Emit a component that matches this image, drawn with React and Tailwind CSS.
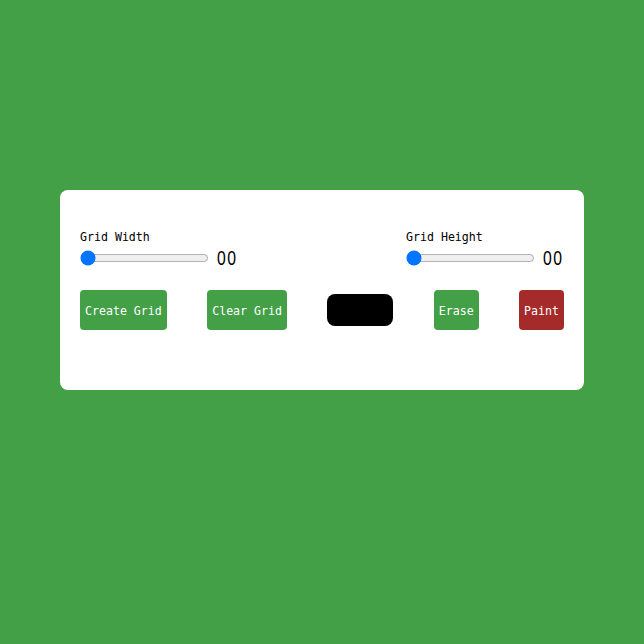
import React, { useState } from "react";

const font = { fontFamily: '"DejaVu Sans Mono", "Liberation Mono", monospace' };

const SizeControl = ({ label, value, onChange }) => (
  <div className="flex flex-col">
    <label className="text-[11.6px] leading-[14px] text-black mb-[4px]">{label}</label>
    <div className="flex items-center">
      <input
        type="range"
        min="0"
        max="50"
        value={value}
        onChange={(e) => onChange(e.target.value)}
        className="w-[129px] m-0"
      />
      <span
        className="ml-[8px] w-[21px] inline-block text-[21px] leading-[20px] font-extralight scale-x-[0.75] origin-left tracking-[2px]"
        style={{ fontFamily: '"Liberation Sans", sans-serif' }}
      >
        {String(value).padStart(2, "0")}
      </span>
    </div>
  </div>
);

const App = () => {
  const [width, setWidth] = useState(0);
  const [height, setHeight] = useState(0);

  return (
    <div className="min-h-screen bg-[#43a047] pt-[190px]" style={font}>
      <div className="mx-auto w-[524px] h-[200px] bg-white rounded-lg px-5 pt-[40px]">
        <div className="flex justify-between items-start">
          <SizeControl label="Grid Width" value={width} onChange={setWidth} />
          <SizeControl label="Grid Height" value={height} onChange={setHeight} />
        </div>
        <div className="flex justify-between items-center mt-[22px]">
          <button className="h-10 px-[5px] pt-[3px] text-[11.6px] text-white bg-[#43a047] rounded">
            Create Grid
          </button>
          <button className="h-10 px-[5px] pt-[3px] text-[11.6px] text-white bg-[#43a047] rounded">
            Clear Grid
          </button>
          <div className="w-[66px] h-8 bg-black rounded-lg" />
          <button className="h-10 px-[5px] pt-[3px] text-[11.6px] text-white bg-[#43a047] rounded">
            Erase
          </button>
          <button className="h-10 px-[5px] pt-[3px] text-[11.6px] text-white bg-[#a52a2a] rounded">
            Paint
          </button>
        </div>
      </div>
    </div>
  );
};

export default App;
